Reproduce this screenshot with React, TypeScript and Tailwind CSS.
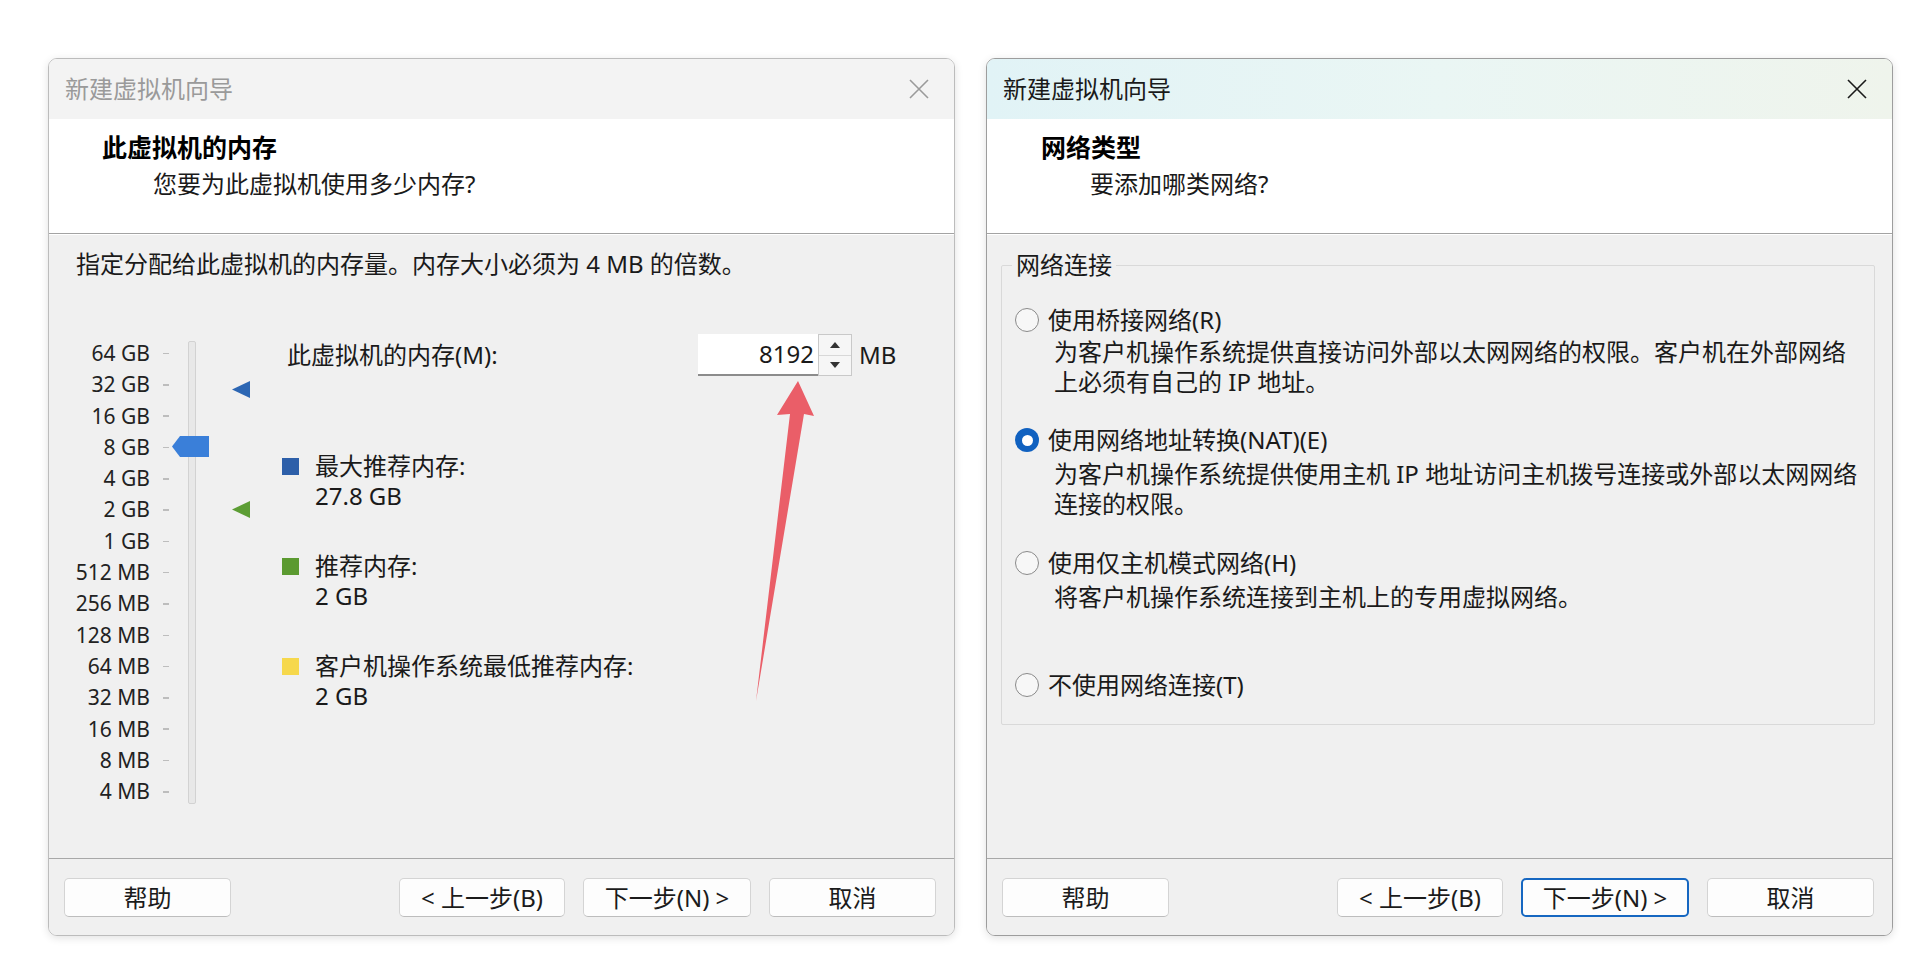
import React from 'react';

const FONT = '"Noto Sans", "Noto Sans CJK SC", sans-serif';

const scaleLabels = [
  '64 GB', '32 GB', '16 GB', '8 GB', '4 GB', '2 GB', '1 GB',
  '512 MB', '256 MB', '128 MB', '64 MB', '32 MB', '16 MB', '8 MB', '4 MB',
];

const CloseIcon: React.FC<{ color: string }> = ({ color }) => (
  <svg width="22" height="22" viewBox="0 0 22 22">
    <path d="M2 2 L20 20 M20 2 L2 20" stroke={color} strokeWidth="1.6" fill="none" />
  </svg>
);

const WizardButton: React.FC<{ label: string; focused?: boolean; className?: string }> = ({ label, focused, className }) => (
  <button
    className={
      'h-[39px] rounded-[5px] bg-[#fdfdfd] text-[24px] text-[#1b1b1b] leading-none flex items-center justify-center ' +
      (focused
        ? 'border-[2px] border-[#1667c1] '
        : 'border border-[#d4d4d4] border-b-[#bdbdbd] ') +
      (className ?? '')
    }
  >
    {label}
  </button>
);

interface DialogProps {
  active?: boolean;
  heading: string;
  sub: string;
  headingLeft: string;
  subLeft: string;
  children: React.ReactNode;
  overlay?: React.ReactNode;
}

const WizardDialog: React.FC<DialogProps> = ({ active, heading, sub, headingLeft, subLeft, children, overlay }) => (
  <div
    className={
      'relative w-[907px] h-[878px] flex flex-col rounded-[9px] overflow-hidden border shadow-[0_2px_8px_rgba(0,0,0,0.12)] ' +
      (active ? 'border-[#9d9d9d]' : 'border-[#bcbcbc]')
    }
  >
    {/* 标题栏 */}
    <div
      className={
        'h-[60px] shrink-0 flex items-center justify-between pl-[16px] pr-[24px] ' +
        (active
          ? 'bg-gradient-to-r from-[#e1f3f6] via-[#eaf6f4] to-[#eff4ec] text-[#1a1a1a]'
          : 'bg-[#f3f3f3] text-[#9a9a9a]')
      }
    >
      <span className="text-[24px] leading-[30px]">新建虚拟机向导</span>
      <CloseIcon color={active ? '#1a1a1a' : '#9a9a9a'} />
    </div>

    {/* 页眉 */}
    <div className="h-[115px] shrink-0 bg-white border-b border-[#a3a3a3] pt-[13px]">
      <div className={'text-[25px] font-bold leading-[30px] text-black ' + headingLeft}>{heading}</div>
      <div className={'mt-[7px] text-[24px] leading-[30px] text-[#1a1a1a] ' + subLeft}>{sub}</div>
    </div>

    {/* 内容 */}
    <div className="flex-1 bg-[#f0f0f0] border-t border-white text-[24px] text-[#1a1a1a]">{children}</div>

    {/* 按钮栏 */}
    <div className="h-[77px] shrink-0 bg-[#f0f0f0] border-t border-[#a8a8a8] flex items-start pt-[19px] pl-[15px] pr-[18px]">
      <WizardButton label="帮助" className="w-[167px]" />
      <div className="flex-1" />
      <div className="flex gap-[18px]">
        <WizardButton label="< 上一步(B)" className="w-[166px]" />
        <WizardButton label="下一步(N) >" focused={active} className="w-[168px]" />
        <WizardButton label="取消" className="w-[167px]" />
      </div>
    </div>

    {overlay}
  </div>
);

const Legend: React.FC<{ color: string; label: string; value: string; className?: string }> = ({ color, label, value, className }) => (
  <div className={'flex items-start ' + (className ?? '')}>
    <div className="w-[17px] h-[17px] mt-[7px] shrink-0" style={{ background: color }} />
    <div className="ml-[16px] leading-[30px]">
      <div>{label}</div>
      <div>{value}</div>
    </div>
  </div>
);

const MemoryBody: React.FC = () => (
  <div className="pl-[27px] pt-[14px]">
    <p className="leading-[30px]">指定分配给此虚拟机的内存量。内存大小必须为 4 MB 的倍数。</p>

    <div className="mt-[59px] flex">
      {/* 滑块 */}
      <div className="relative w-[206px] flex shrink-0">
        <div className="w-[74px] flex flex-col items-end text-[21px] text-[#222]">
          {scaleLabels.map((l) => (
            <div key={l} className="h-[31.3px] leading-[31.3px] whitespace-nowrap">{l}</div>
          ))}
        </div>
        <div className="ml-[13px] w-[6px] flex flex-col">
          {scaleLabels.map((l) => (
            <div key={l} className="h-[31.3px] flex items-center">
              <div className="w-[6px] h-[1.5px] bg-[#bdbdbd]" />
            </div>
          ))}
        </div>
        <div className="ml-[19px] mt-[3px] w-[8px] h-[463px] bg-[#e8e8e8] border border-[#d2d2d2] rounded-[2px]" />

        <svg className="absolute left-[96px] top-[98px]" width="37" height="21" viewBox="0 0 37 21">
          <polygon points="0,10.5 8,0 37,0 37,21 8,21" fill="#3a7fd9" />
        </svg>
        <svg className="absolute left-[156px] top-[43px]" width="18" height="17" viewBox="0 0 18 17">
          <polygon points="0,8.5 18,0 18,17" fill="#2c66b3" />
        </svg>
        <svg className="absolute left-[156px] top-[163px]" width="18" height="17" viewBox="0 0 18 17">
          <polygon points="0,8.5 18,0 18,17" fill="#5c9d34" />
        </svg>
      </div>

      {/* 右侧 */}
      <div className="flex flex-col">
        <div className="-mt-[4px] h-[42px] flex items-center">
          <span className="ml-[5px] w-[411px] leading-[30px]">此虚拟机的内存(M):</span>
          <div className="w-[120px] h-[42px] bg-white border-b-[2px] border-[#8c8c8c] flex items-center justify-end pr-[4px]">
            8192
          </div>
          <div className="w-[34px] h-[42px] border border-[#c9c9c9] bg-[#f6f6f6] flex flex-col">
            <div className="flex-1 flex items-center justify-center border-b border-[#d8d8d8]">
              <svg width="10" height="6" viewBox="0 0 10 6"><polygon points="5,0 10,6 0,6" fill="#333" /></svg>
            </div>
            <div className="flex-1 flex items-center justify-center">
              <svg width="10" height="6" viewBox="0 0 10 6"><polygon points="0,0 10,0 5,6" fill="#333" /></svg>
            </div>
          </div>
          <span className="ml-[7px]">MB</span>
        </div>

        <Legend className="mt-[75px]" color="#2d5fa9" label="最大推荐内存:" value="27.8 GB" />
        <Legend className="mt-[40px]" color="#5b9a30" label="推荐内存:" value="2 GB" />
        <Legend className="mt-[40px]" color="#f6d84c" label="客户机操作系统最低推荐内存:" value="2 GB" />
      </div>
    </div>
  </div>
);

const Radio: React.FC<{ checked?: boolean }> = ({ checked }) =>
  checked ? (
    <div className="w-[24px] h-[24px] rounded-full bg-[#1061c0] flex items-center justify-center shrink-0">
      <div className="w-[11px] h-[11px] rounded-full bg-white" />
    </div>
  ) : (
    <div className="w-[24px] h-[24px] rounded-full border-[1.5px] border-[#8a8a8a] bg-[#f7f7f7] shrink-0" />
  );

const RadioRow: React.FC<{ label: string; checked?: boolean; className?: string }> = ({ label, checked, className }) => (
  <div className={'h-[30px] flex items-center pl-[13px] ' + (className ?? '')}>
    <Radio checked={checked} />
    <span className="ml-[9px] leading-[30px]">{label}</span>
  </div>
);

const NetworkBody: React.FC = () => (
  <div className="pt-[15px] pl-[14px] pr-[17px]">
    <fieldset className="border border-[#d9d9d9] rounded-[2px] pt-[25px] pb-[24px]">
      <legend className="ml-[10px] px-[4px] leading-[30px]">网络连接</legend>
      <RadioRow label="使用桥接网络(R)" />
      <div className="mt-[2px] pl-[52px] leading-[30px]">
        为客户机操作系统提供直接访问外部以太网网络的权限。客户机在外部网络
        <br />
        上必须有自己的 IP 地址。
      </div>
      <RadioRow className="mt-[28px]" label="使用网络地址转换(NAT)(E)" checked />
      <div className="mt-[4px] pl-[52px] leading-[30px]">
        为客户机操作系统提供使用主机 IP 地址访问主机拨号连接或外部以太网网络
        <br />
        连接的权限。
      </div>
      <RadioRow className="mt-[29px]" label="使用仅主机模式网络(H)" />
      <div className="mt-[4px] pl-[52px] leading-[30px]">将客户机操作系统连接到主机上的专用虚拟网络。</div>
      <RadioRow className="mt-[58px]" label="不使用网络连接(T)" />
    </fieldset>
  </div>
);

const RedArrow: React.FC = () => (
  <svg className="absolute left-[690px] top-[310px] pointer-events-none" width="90" height="340" viewBox="0 0 90 340">
    <polygon points="59,12 75,47 65,45 17,332 51,45 38,46" fill="#ea5e68" />
  </svg>
);

export default function App() {
  return (
    <div className="w-[1930px] h-[966px] bg-white overflow-hidden" style={{ fontFamily: FONT }}>
      <div className="flex gap-[31px] pl-[48px] pt-[58px]">
        <WizardDialog
          heading="此虚拟机的内存"
          sub="您要为此虚拟机使用多少内存?"
          headingLeft="pl-[53px]"
          subLeft="pl-[104px]"
          overlay={<RedArrow />}
        >
          <MemoryBody />
        </WizardDialog>
        <WizardDialog
          active
          heading="网络类型"
          sub="要添加哪类网络?"
          headingLeft="pl-[54px]"
          subLeft="pl-[103px]"
        >
          <NetworkBody />
        </WizardDialog>
      </div>
    </div>
  );
}
